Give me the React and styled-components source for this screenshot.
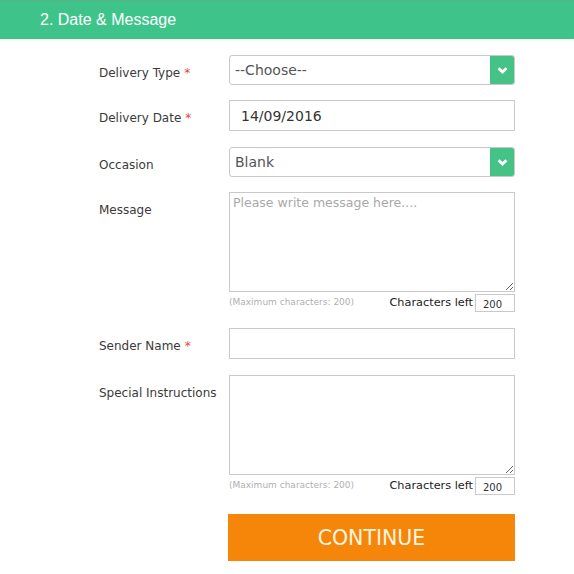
import React from 'react';
import styled, { createGlobalStyle } from 'styled-components';

const GlobalStyle = createGlobalStyle`
  body {
    margin: 0;
    background: #fff;
    font-family: "DejaVu Sans", Verdana, sans-serif;
  }
`;

// green section header
const Header = styled.div`
  height: 38px;
  border-top: 1px solid #5fb089;
  background: #3ec48a;
  display: flex;
  align-items: center;
  padding-left: 40px;
  box-shadow: 0 1px 2px rgba(0, 0, 0, 0.08);
`;

const HeaderTitle = styled.h2`
  margin: 0;
  font-family: "Liberation Sans", Arial, sans-serif;
  font-weight: normal;
  font-size: 16px;
  color: #fff;
`;

const Form = styled.div`
  padding: 16px 0 0 99px;
  display: flex;
  flex-direction: column;
`;

const Row = styled.div`
  display: grid;
  grid-template-columns: 130px 286px;
  margin-bottom: ${p => p.$gap}px;
`;

const Label = styled.label`
  font-size: 12px;
  color: #3a3a3a;
  padding-top: 11px;
`;

const Star = styled.span`
  color: #e4453d;
  margin-left: 4px;
`;

const FieldCol = styled.div`
  display: flex;
  flex-direction: column;
`;

const SelectBox = styled.div`
  height: 30px;
  box-sizing: border-box;
  border: 1px solid #c9c9c9;
  border-radius: 3px;
  display: flex;
  align-items: center;
  overflow: hidden;
`;

const SelectText = styled.span`
  flex: 1;
  padding-left: 5px;
  font-size: 14px;
  color: #555;
`;

const ArrowBtn = styled.span`
  width: 24px;
  align-self: stretch;
  background: #45c286;
  display: flex;
  align-items: center;
  justify-content: center;
`;

const TextInput = styled.input`
  height: 31px;
  box-sizing: border-box;
  border: 1px solid #c9c9c9;
  padding: 0 11px;
  font-family: "DejaVu Sans", Verdana, sans-serif;
  font-size: 14px;
  color: #333;
  outline: none;
`;

const TextArea = styled.textarea`
  height: ${p => p.$h}px;
  box-sizing: border-box;
  border: 1px solid #c9c9c9;
  padding: 2px 3px;
  font-family: "DejaVu Sans", Verdana, sans-serif;
  font-size: 12.5px;
  color: #333;
  resize: vertical;
  outline: none;

  &::placeholder {
    color: #a9a9a9;
  }
`;

const CounterRow = styled.div`
  display: flex;
  align-items: flex-start;
  margin-top: 2px;
`;

const MaxNote = styled.span`
  font-size: 9px;
  color: #b0b0b0;
  padding-top: 3px;
  flex: 1;
`;

const CharsLeft = styled.span`
  font-size: 11.3px;
  color: #222;
  padding-top: 2px;
  margin-right: 2px;
`;

const CountBox = styled.span`
  width: 40px;
  height: 18px;
  box-sizing: border-box;
  border: 1px solid #c9c9c9;
  font-size: 10px;
  color: #333;
  padding: 4px 0 0 7px;
`;

const ContinueBtn = styled.button`
  width: 287px;
  height: 47px;
  margin-left: 129px;
  border: none;
  background: #f5860a;
  color: #fff6e0;
  font-family: "DejaVu Sans", Verdana, sans-serif;
  font-size: 20.5px;
  cursor: pointer;
`;

function Chevron() {
  return (
    <svg width="11" height="9" viewBox="0 0 11 9">
      <path d="M1.6 2.2 L5.5 6 L9.4 2.2" fill="none" stroke="#fff" strokeWidth="2.8" />
    </svg>
  );
}

function Select({ value }) {
  return (
    <SelectBox>
      <SelectText>{value}</SelectText>
      <ArrowBtn><Chevron /></ArrowBtn>
    </SelectBox>
  );
}

function Counter() {
  return (
    <CounterRow>
      <MaxNote>(Maximum characters: 200)</MaxNote>
      <CharsLeft>Characters left</CharsLeft>
      <CountBox>200</CountBox>
    </CounterRow>
  );
}

export default function App() {
  return (
    <>
      <GlobalStyle />
      <Header>
        <HeaderTitle>2. Date &amp; Message</HeaderTitle>
      </Header>
      <Form>
        <Row $gap={15}>
          <Label>Delivery Type<Star>*</Star></Label>
          <Select value="--Choose--" />
        </Row>
        <Row $gap={16}>
          <Label>Delivery Date<Star>*</Star></Label>
          <TextInput defaultValue="14/09/2016" />
        </Row>
        <Row $gap={15}>
          <Label>Occasion</Label>
          <Select value="Blank" />
        </Row>
        <Row $gap={16}>
          <Label>Message</Label>
          <FieldCol>
            <TextArea $h={100} placeholder="Please write message here...." />
            <Counter />
          </FieldCol>
        </Row>
        <Row $gap={16}>
          <Label>Sender Name<Star>*</Star></Label>
          <TextInput />
        </Row>
        <Row $gap={19}>
          <Label>Special Instructions</Label>
          <FieldCol>
            <TextArea $h={100} />
            <Counter />
          </FieldCol>
        </Row>
        <ContinueBtn>CONTINUE</ContinueBtn>
      </Form>
    </>
  );
}
